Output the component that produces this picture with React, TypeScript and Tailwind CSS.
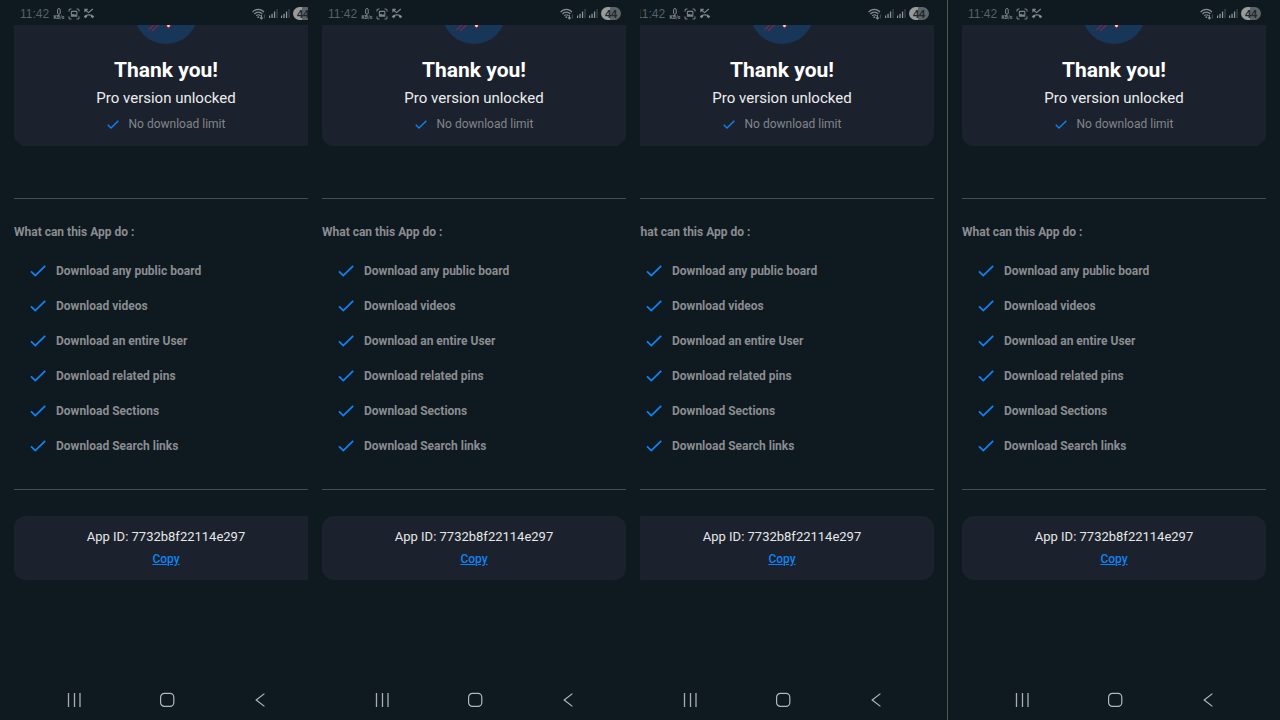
import React from "react";

const features = [
  "Download any public board",
  "Download videos",
  "Download an entire User",
  "Download related pins",
  "Download Sections",
  "Download Search links",
];

function Check({ className }: { className: string }) {
  return (
    <svg viewBox="0 0 16 12" className={className} fill="none" aria-hidden="true">
      <path d="M1 6.4 5.3 10.6 15.2 0.9" stroke="#0f83f5" strokeWidth="1.8" />
    </svg>
  );
}

function Signal() {
  return (
    <svg viewBox="0 0 9 9" className="h-[9px] w-[9px]" aria-hidden="true">
      <path d="M0 6.5h1.2V9H0zM2.4 4.8h1.3V9H2.4zM4.9 2.6h1.3V9H4.9z" fill="#8d9397" />
      <path d="M7.4 0h1.2v9H7.4z" fill="#41494f" />
    </svg>
  );
}

function StatusBar() {
  return (
    <header className="flex h-[25px] shrink-0 items-center justify-between pt-1 pr-[19px] pb-0.5 pl-5">
      <div className="flex items-center gap-[3px]">
        <time className="w-[30px] font-['Liberation_Sans',sans-serif] text-xs leading-4 whitespace-nowrap text-[#596066]">11:42</time>
        <div className="flex w-3 flex-col items-center text-[#858b90]">
          <svg viewBox="0 0 6 8" className="h-[7px] w-1.5" fill="none" aria-hidden="true">
            <rect x="1.4" y="0.6" width="3" height="6.6" rx="1.5" stroke="#858b90" strokeWidth="1.1" />
          </svg>
          <span className="text-[5px] leading-[5px] font-bold">KB/s</span>
        </div>
        <svg viewBox="0 0 12 12" className="h-3 w-3" fill="none" stroke="#7c8287" strokeWidth="1.1" aria-hidden="true">
          <path d="M1 3.5V2.3Q1 1 2.3 1h1.2M8.5 1h1.2Q11 1 11 2.3v1.2M11 8.5v1.2Q11 11 9.7 11H8.5M3.5 11H2.3Q1 11 1 9.7V8.5" />
          <path d="M3.9 3.4h4.4q.5 0 .5.5v4.3H3.4V3.9q0-.5.5-.5z" />
          <path d="M3.6 8V6.7l1.5-.9 1.5 1 1-.5 1 .6V8z" fill="#7c8287" stroke="none" />
        </svg>
        <svg viewBox="0 0 12 11" className="h-[11px] w-3" fill="none" aria-hidden="true">
          <path d="M1.9 4.2V1.4h2.8M2 1.5l3.5 3.1L9.8 1" stroke="#858b90" strokeWidth="1.1" />
          <path d="M.8 8.6C3.4 5.4 8.6 5.4 11.2 8.6L9.6 10.2 7.9 8.9V7.8C6.8 7.4 5.2 7.4 4.1 7.8v1.1L2.4 10.2z" fill="#858b90" />
        </svg>
      </div>
      <div className="flex items-center gap-[3px]">
        <svg viewBox="0 0 14 12" className="h-3 w-3.5" fill="none" stroke="#858b90" strokeWidth="1.2" aria-hidden="true">
          <path d="M.6 4.2C3.5.4 9.2.4 12 4.2M2.4 6C4.5 3.5 8.2 3.5 10.3 6M4.3 7.8c1.3-1.4 2.9-1.4 4.1 0" />
          <circle cx="6.3" cy="9.2" r="0.9" fill="#858b90" stroke="none" />
          <path d="M9.4 7v4M8 9.6l1.4 1.4 1.4-1.4" />
          <path d="M12.4 6.4v4" stroke="#3d454b" />
        </svg>
        <Signal />
        <Signal />
        <span className="flex h-[13px] w-5 items-center justify-center rounded-full bg-linear-to-r from-[#969b9e] from-45% to-[#5d6468] to-45% font-['Liberation_Sans',sans-serif] text-[11px] leading-3 font-bold text-[#20282d]">
          44
        </span>
      </div>
    </header>
  );
}

function Rocket() {
  return (
    <svg viewBox="0 0 64 64" className="-mt-[45px] h-16 w-16 shrink-0" aria-hidden="true">
      <circle cx="32" cy="32" r="32" fill="#183658" />
      <path d="M20 45 14.5 49.8M24.5 45 18 51" stroke="#73294a" strokeWidth="1.5" />
      <path d="M32 38h5.5v7.5L34.5 49 32 46z" fill="#73294a" />
      <circle cx="34.5" cy="45.8" r="1.4" fill="#ffd9b0" />
    </svg>
  );
}

function NavBar() {
  return (
    <nav aria-label="System" className="mt-auto flex h-10 shrink-0 items-center justify-between pr-[60px] pl-[62px]">
      <button aria-label="Recents" className="flex h-6 w-6 items-center justify-center">
        <svg viewBox="0 0 14 14" className="h-3.5 w-3.5" stroke="#a8adb1" strokeWidth="1.3">
          <path d="M1.5 0v14M7.5 0v14M13 0v14" />
        </svg>
      </button>
      <button aria-label="Home" className="flex h-6 w-6 items-center justify-center">
        <svg viewBox="0 0 16 16" className="h-4 w-4" fill="none" stroke="#b4b8bb" strokeWidth="1.2">
          <rect x="1.6" y="1.4" width="13.2" height="13" rx="3.8" />
        </svg>
      </button>
      <button aria-label="Back" className="flex h-6 w-6 items-center justify-center">
        <svg viewBox="0 0 10 14" className="h-3.5 w-2.5" fill="none" stroke="#b4b8bb" strokeWidth="1.2">
          <path d="M9.4.6 1.2 7 9.4 13.4" />
        </svg>
      </button>
    </nav>
  );
}

function Phone() {
  return (
    <div className="flex min-h-screen w-[332px] min-w-full shrink-0 flex-col">
      <StatusBar />
      <main className="flex flex-col px-3.5">
        <section className="flex flex-col items-center overflow-hidden rounded-b-xl bg-[#1c222d] pb-3">
          <Rocket />
          <h1 className="mt-3 text-[21px] leading-7 font-bold text-white">Thank you!</h1>
          <p className="mt-0.5 text-[15px] leading-6 text-[#eceded]">Pro version unlocked</p>
          <p className="mt-1 flex items-center gap-2.5 text-xs leading-5 text-[#82858b]">
            <Check className="h-[9px] w-3" />
            No download limit
          </p>
        </section>
        <hr className="mt-[52px] border-[#4b4c52]" />
        <h2 className="mt-[23px] text-xs leading-5 font-bold text-[#8b8d90]">What can this App do :</h2>
        <ul className="mt-[11px] flex flex-col">
          {features.map((feature) => (
            <li key={feature} className="flex h-[35px] items-center gap-2.5 pl-4 text-xs font-bold text-[#8b8d90]">
              <Check className="h-3 w-4" />
              {feature}
            </li>
          ))}
        </ul>
        <hr className="mt-[26px] border-[#4b4c52]" />
        <section className="mt-[26px] flex flex-col items-center rounded-xl bg-[#1c222d] py-2.5">
          <p className="text-[13px] leading-[22px] text-[#e6e7e8]">App ID: 7732b8f22114e297</p>
          <button className="text-xs leading-[22px] font-medium text-[#0f83f5] underline">Copy</button>
        </section>
      </main>
      <NavBar />
    </div>
  );
}

export default function App() {
  return (
    <div className="grid min-h-screen grid-cols-[308fr_332fr_308fr_332fr] bg-[#0f1920] font-['Roboto',sans-serif]">
      <div className="flex overflow-hidden">
        <Phone />
      </div>
      <div className="flex overflow-hidden">
        <Phone />
      </div>
      <div className="flex overflow-hidden border-r border-[#4d5a4c]">
        <div className="-ml-6 flex shrink-0">
          <Phone />
        </div>
      </div>
      <div className="flex overflow-hidden">
        <Phone />
      </div>
    </div>
  );
}
